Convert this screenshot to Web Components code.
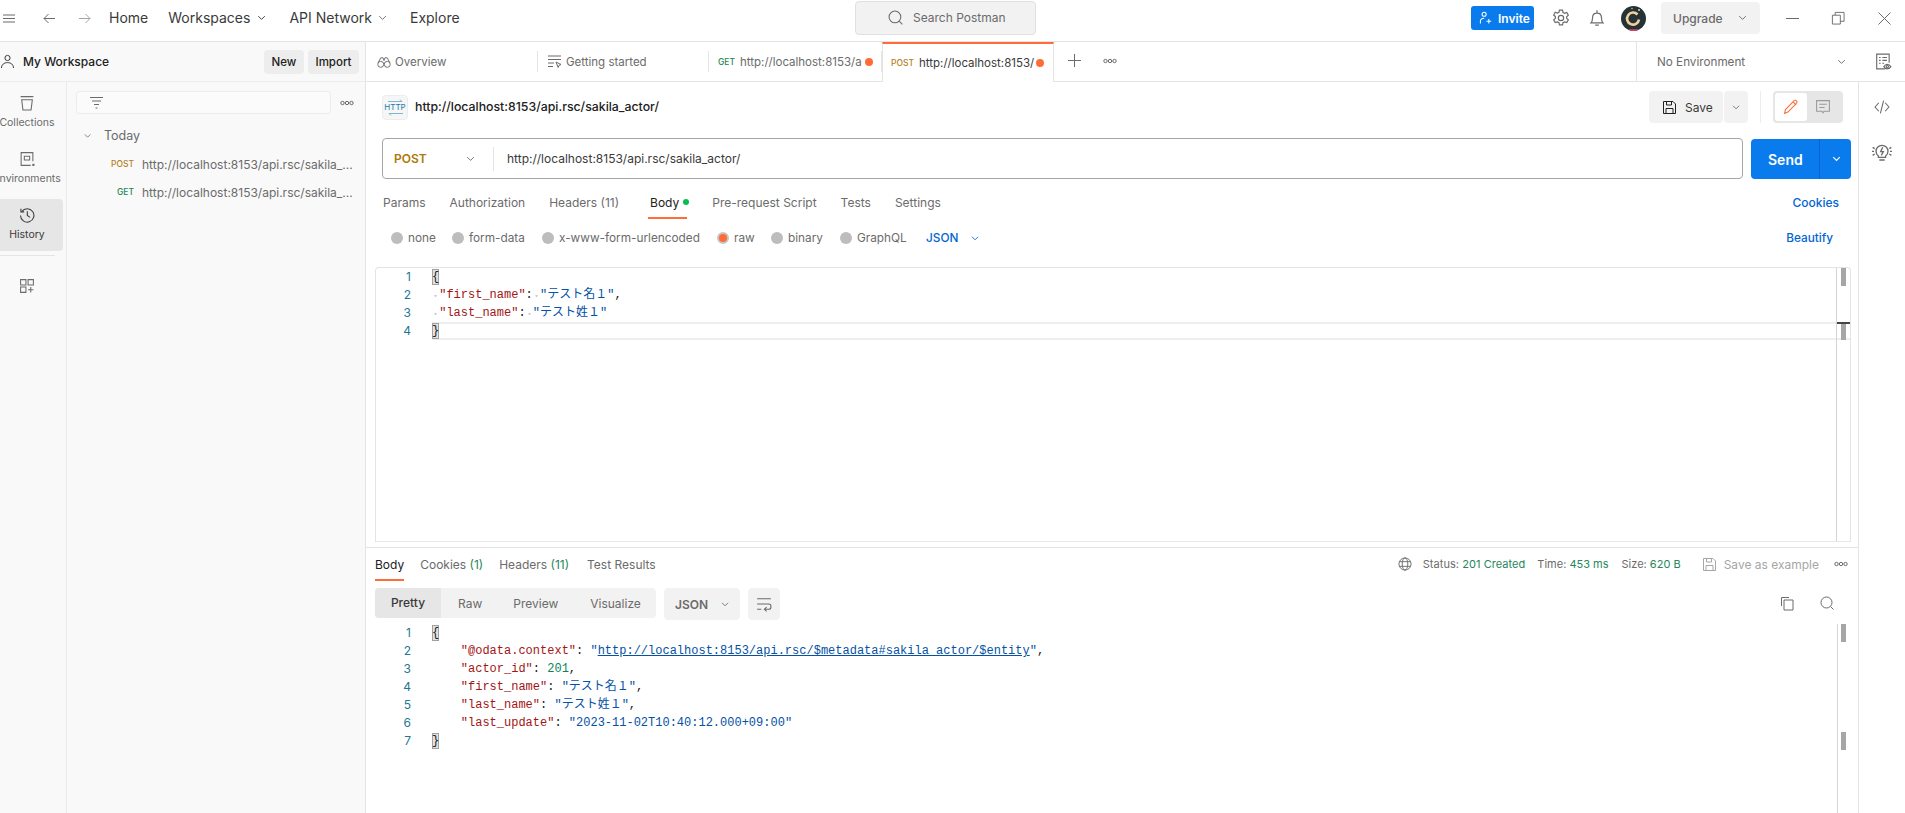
<!DOCTYPE html>
<html>
<head>
<meta charset="utf-8">
<title>Postman</title>
<style>
  html, body { margin: 0; height: 100%; background: #fff; overflow: hidden; }
  body { font: 12px Inter, "Noto Sans CJK JP", sans-serif; color: #212121; }
</style>
</head>
<body>
<pm-app></pm-app>
<script>
const ICON = {
  menu: '<path d="M1 4h12M1 7.5h12M1 11h12"/>',
  left: '<path d="M13 7.5H2M6.5 3 2 7.5 6.5 12"/>',
  right: '<path d="M1 7.5h11M7.5 3 12 7.5 7.5 12"/>',
  chev: '<path d="M3.5 5.5 7 9l3.5-3.5"/>',
  search: '<circle cx="6.5" cy="6.5" r="5.5"/><path d="m10.5 10.5 3 3"/>',
  gear: '<path d="M6.2 1h2.6l.4 1.9 1.3.7 1.8-.7 1.3 2.3-1.4 1.2v1.4l1.4 1.3-1.3 2.2-1.8-.6-1.3.7-.4 1.9H6.2l-.4-1.9-1.3-.7-1.8.6-1.3-2.2 1.4-1.3V6.2L1.4 5l1.3-2.3 1.8.7 1.3-.7z"/><circle cx="7.5" cy="7.5" r="2.2"/>',
  bell: '<path d="M2.5 11.5c1-1 1.3-2 1.3-4.2 0-2.3 1.5-3.9 3.7-3.9s3.7 1.6 3.7 3.9c0 2.2.3 3.2 1.3 4.2zM7.5 1v2.4M6 13.5h3"/>',
  user: '<circle cx="7.5" cy="4" r="2.6"/><path d="M1.5 14c0-3.4 2.6-5.4 6-5.4s6 2 6 5.4"/>',
  userplus: '<circle cx="5.5" cy="3.5" r="2.2"/><path d="M1.5 13.5V11c0-2 1.6-3.3 4-3.3M10.5 8.5v5M8 11h5"/>',
  trash: '<path d="M1.5 1.5h12M2.5 4.5h10l-1.2 9.5H3.7z"/>',
  env: '<path d="M13 9.5V1.5H2v12h9"/><path d="M5 5h5v3.5H5z"/><path d="M13 12.5h1v1h-1z" fill="currentColor"/>',
  hist: '<path d="M2.6 4.2A6.3 6.3 0 1 1 1.4 8"/><path d="M1.8 1.6v3h3M7.8 4v4l2.6 1.7"/>',
  add: '<path d="M1.5 1.5h5v5h-5zM8.5 1.5h5v5h-5zM1.5 8.5h5v5h-5zM11 8.5v5M8.5 11h5"/>',
  filter: '<path d="M1 2.5h13M3 6h9M5 9.5h5M6.5 13h2"/>',
  glasses: '<circle cx="4" cy="10" r="3.2"/><circle cx="11" cy="10" r="3.2"/><path d="M1.2 8.5 4 3h2.5l1 3 1-3H11l2.8 5.5"/>',
  doc: '<path d="M1 2h13M1 5.5h13M1 9h6M1 12.5h5M9 8l5 2.5-2 .8-.8 2.2z"/>',
  save: '<path d="M1.5 1.5H11L13.500 4v9.500h-12zM4.500 1.500V5h5V1.500M4 13.500V8.500h7v5"/>',
  pencil: '<path d="m1.500 13.500.8-3.600 8-8.200c.7-.6 1.700-.6 2.300 0s.6 1.600 0 2.300l-8 8.200zM9.500 2.800l2.800 2.800"/>',
  comment: '<path d="M1.500 1.500h12v10h-5l-1 1.500-1-1.500h-5zM4 5h7M4 8h5"/>',
  code: '<path d="M4.500 3.500 1 7.500l3.500 4M10.500 3.500l3.500 4-3.500 4M9 1.500l-3 12"/>',
  bulb: '<path d="M4.800 10.500C3.600 9.600 3 8.300 3 7a4.500 4.500 0 0 1 9 0c0 1.300-.6 2.600-1.800 3.500v1H4.800zM5.500 13.500h4M8 4 6.500 7.200h2L7 10M.5 4 2 5M.5 10 2 9M14.500 4 13 5M14.500 10 13 9M0 7h1.500M13.500 7H15"/>',
  envdoc: '<path d="M9 14H1.500V1h11v7.500M3.500 4H5M6.500 4h4M3.500 6.500H5M6.500 6.500h4M3.500 9H5M6.500 9H8"/><path d="M7.800 12c1-1.500 2-2 3-2s2.200.5 3.200 2c-1 1.500-2.100 2-3.200 2s-2-.5-3-2z"/><circle cx="10.900" cy="12" r="1"/>',
  globe: '<circle cx="7.500" cy="7.500" r="6.500"/><ellipse cx="7.500" cy="7.500" rx="3" ry="6.500"/><path d="M1.500 5h12M1.500 10h12"/>',
  copy: '<path d="M1.500 10V1.500H9"/><path d="M4 4h9v10H4z"/>',
  wrap: '<path d="M1 2.500h13M1 12.500h4M1 7.500h11c2.700 0 2.700 5 0 5H8M10 10.500l-2.200 2 2.200 2"/>',
  restore: '<path d="M1.500 4.500H10V14H1.500zM4.500 4.500v-3H14V11h-4"/>',
  min: '<path d="M1 7.500h13"/>',
  close: '<path d="m1.500 1.500 12 12M13.500 1.500l-12 12"/>',
  plus: '<path d="M7.500 1v13M1 7.500h13"/>',
};

// shared small inline svg helper
function icon(name, size = 16, color = '#6b6b6b', sw = 1) {
  return `<svg width="${size}" height="${size}" viewBox="0 0 15 15" fill="none" stroke="${color}" stroke-width="${sw}" style="display:block;flex:none;color:${color}">${ICON[name]}</svg>`;
}

const DOTS = `<svg width="14" height="6" viewBox="0 0 14 6" fill="none" stroke="#6b6b6b" style="display:block;flex:none"><circle cx="2.500" cy="3" r="1.700"/><circle cx="7" cy="3" r="1.700"/><circle cx="11.500" cy="3" r="1.700"/></svg>`;

class PmHeader extends HTMLElement {
  constructor() { super(); this.attachShadow({ mode: 'open' }); }
  connectedCallback() {
    this.shadowRoot.innerHTML = `
    <style>
      :host { display: flex; align-items: center; height: 36px; padding-bottom: 5px; border-bottom: 1px solid #e4e4e4; font: 14px/18px Inter, sans-serif; color: #3a3a3a; }
      .nav { display: flex; align-items: center; width: 855px; flex: none; padding-left: 2px; box-sizing: border-box; }
      .search { width: 181px; height: 34px; flex: none; box-sizing: border-box; background: #f2f2f2; border: 1px solid #e0e0e0; border-radius: 4px; display: flex; align-items: center; padding-left: 32px; gap: 9px; font-size: 12px; color: #6b6b6b; }
      .right { margin-left: auto; display: flex; align-items: center; height: 36px; }
      .invite { width: 63px; height: 24px; background: #097bed; color: #fff; border-radius: 3px; font: 600 12px Inter, sans-serif; display: flex; align-items: center; gap: 5px; padding-left: 8px; box-sizing: border-box; }
      .avatar { width: 25px; height: 25px; border-radius: 50%; background: #243338; margin-left: 15px; overflow: hidden; }
      .up { width: 99px; height: 32px; background: #f2f2f2; border-radius: 4px; margin-left: 15px; display: flex; align-items: center; box-sizing: border-box; padding-left: 12px; font: 500 12px Inter, sans-serif; color: #6b6b6b; justify-content: space-between; padding-right: 10px; }
    </style>
    <div class="nav">
      ${icon('menu', 15, '#6b6b6b')}
      <span style="margin-left:25px">${icon('left', 15, '#6b6b6b')}</span>
      <span style="margin-left:21px">${icon('right', 15, '#a6a6a6')}</span>
      <span style="margin-left:16px">Home</span>
      <span style="margin-left:20px">Workspaces</span>
      <span style="margin-left:5px">${icon('chev', 14, '#3a3a3a')}</span>
      <span style="margin-left:20px">API Network</span>
      <span style="margin-left:4px">${icon('chev', 14, '#6b6b6b')}</span>
      <span style="margin-left:20px">Explore</span>
    </div>
    <div class="search">${icon('search', 16, '#6b6b6b')}<span>Search Postman</span></div>
    <div class="right">
      <div class="invite">${icon('userplus', 14, '#fff', 1.1)}<span>Invite</span></div>
      <span style="margin-left:18px">${icon('gear', 18, '#6b6b6b')}</span>
      <span style="margin-left:18px">${icon('bell', 18, '#6b6b6b')}</span>
      <div class="avatar"><svg width="25" height="25" viewBox="0 0 25 25" fill="none" style="display:block"><path d="M16.500 8.500a6 6 0 1 0 1.500 5" stroke="#f3cf9b" stroke-width="2.600"/><circle cx="18" cy="4" r="1" fill="#f3cf9b"/><circle cx="11" cy="2.500" r=".7" fill="#f3cf9b"/><path d="M8 24.500h9" stroke="#e0425f" stroke-width="2.500"/></svg></div>
      <div class="up"><span>Upgrade</span>${icon('chev', 14, '#6b6b6b')}</div>
      <span style="margin-left:25px">${icon('min', 15, '#6b6b6b')}</span>
      <span style="margin-left:31px">${icon('restore', 14, '#6b6b6b')}</span>
      <span style="margin-left:32px;margin-right:13px">${icon('close', 15, '#6b6b6b')}</span>
    </div>`;
  }
}
customElements.define('pm-header', PmHeader);

class PmSidebar extends HTMLElement {
  constructor() { super(); this.attachShadow({ mode: 'open' }); }
  connectedCallback() {
    const rail = [['trash', 'Collections'], ['env', 'Environments'], ['hist', 'History']];
    this.shadowRoot.innerHTML = `
    <style>
      :host { display: flex; flex-direction: column; width: 366px; flex: none; box-sizing: border-box; border-right: 1px solid #e4e4e4; background: #f9f9f9; overflow: hidden; height: 100%; }
      .top { display: flex; align-items: center; height: 40px; flex: none; border-bottom: 1px solid #ececec; box-sizing: border-box; }
      .top b { font: 500 12px Inter, sans-serif; margin-left: 8px; color: #212121; }
      .btn { height: 24px; background: #ededed; border-radius: 4px; font: 500 11.5px/24px Inter, sans-serif; text-align: center; color: #212121; }
      .cols { display: flex; flex: 1; min-height: 0; }
      .rail { width: 67px; flex: none; box-sizing: border-box; border-right: 1px solid #ececec; padding-top: 5px; overflow: hidden; }
      .item { width: 54px; height: 52px; margin-bottom: 4px; display: flex; flex-direction: column; align-items: center; white-space: nowrap; font-size: 10.5px; color: #6b6b6b; box-sizing: border-box; padding-top: 8px; gap: 5px; }
      .item.on { width: 63px; color: #3a3a3a; background: #e6e6e6; border-radius: 0 4px 4px 0; padding-right: 9px; }
      .sep { width: 55px; height: 1px; background: #e4e4e4; }
      .list { flex: 1; min-width: 0; }
      .filter { margin: 9px 0 0 9px; width: 255px; height: 23px; box-sizing: border-box; background: #fbfbfb; border: 1px solid #ececec; border-radius: 3px; padding: 3px 0 0 12px; }
      .row { display: flex; align-items: center; white-space: nowrap; }
      .m { width: 67px; text-align: right; flex: none; font: 500 8.5px Inter, sans-serif; }
      .u { margin-left: 8px; color: #6b6b6b; font-size: 12px; }
    </style>
    <div class="top">
      ${icon('user', 15, '#3a3a3a')}
      <b>My Workspace</b>
      <div class="btn" style="margin-left:auto;width:40px">New</div>
      <div class="btn" style="margin-left:4px;width:51px;margin-right:6px">Import</div>
    </div>
    <div class="cols">
      <div class="rail">
        ${rail.map(r => `<div class="item ${r[0] === 'hist' ? 'on' : ''}">${icon(r[0], 16, r[0] === 'hist' ? '#3a3a3a' : '#6b6b6b')}<span>${r[1]}</span></div>`).join('')}
        <div class="sep"></div>
        <div style="width:54px;display:flex;justify-content:center;margin-top:22px">${icon('add', 16, '#6b6b6b')}</div>
      </div>
      <div class="list">
        <div style="display:flex;align-items:center">
          <div class="filter">${icon('filter', 15, '#6b6b6b')}</div>
          <span style="margin:9px 0 0 9px">${DOTS}</span>
        </div>
        <div class="row" style="margin-top:13px;color:#6b6b6b;font-size:12.5px;line-height:18px">
          <span style="margin-left:15px">${icon('chev', 12, '#6b6b6b')}</span>
          <span style="margin-left:10px">Today</span>
        </div>
        <div class="row" style="margin-top:10px;height:18px"><span class="m" style="color:#b5811d">POST</span><span class="u">http://localhost:8153/api.rsc/sakila_...</span></div>
        <div class="row" style="margin-top:10px;height:18px"><span class="m" style="color:#26875a">GET</span><span class="u">http://localhost:8153/api.rsc/sakila_...</span></div>
      </div>
    </div>`;
  }
}
customElements.define('pm-sidebar', PmSidebar);

class PmTabs extends HTMLElement {
  constructor() { super(); this.attachShadow({ mode: 'open' }); }
  connectedCallback() {
    const dot = '<i class="dot"></i>';
    this.shadowRoot.innerHTML = `
    <style>
      :host { display: flex; height: 40px; flex: none; border-bottom: 1px solid #e4e4e4; box-sizing: border-box; font: 11.5px Inter, sans-serif; color: #6b6b6b; }
      .tab { display: flex; align-items: center; height: 39px; box-sizing: border-box; white-space: nowrap; position: relative; }
      .tab::after { content: ""; position: absolute; right: 0; top: 9px; height: 21px; width: 1px; background: #e4e4e4; }
      .m { font: 500 8.5px Inter, sans-serif; }
      .dot { width: 8px; height: 8px; border-radius: 50%; background: #ff6c37; flex: none; }
      .on { border-top: 2px solid #ff6c37; border-right: 1px solid #e4e4e4; border-left: 1px solid #e4e4e4; height: 40px; margin-bottom: -1px; background: #fff; color: #3a3a3a; }
      .on::after { display: none; }
      .env { margin-left: auto; width: 269px; box-sizing: border-box; border-left: 1px solid #e4e4e4; display: flex; align-items: center; padding-left: 20px; font-size: 11.7px; }
    </style>
    <div class="tab" style="width:172px;padding-left:11px">${icon('glasses', 14)}<span style="margin-left:4px">Overview</span></div>
    <div class="tab" style="width:171px;padding-left:9px">${icon('doc', 15)}<span style="margin-left:4px">Getting started</span></div>
    <div class="tab" style="width:173px;padding-left:9px"><span class="m" style="color:#26875a">GET</span><span style="margin-left:5px;width:119px">http://localhost:8153/a</span><span style="margin-left:6px"></span>${dot}</div>
    <div class="tab on" style="width:172px;padding-left:8px"><span class="m" style="color:#b5811d">POST</span><span style="margin-left:5px;width:112px">http://localhost:8153/</span><span style="margin-left:5px"></span>${dot}</div>
    <span style="margin:11px 0 0 13px">${icon('plus', 15, '#6b6b6b')}</span>
    <span style="margin:16px 0 0 21px">${DOTS}</span>
    <div class="env">
      <span>No Environment</span>
      <span style="margin-left:auto">${icon('chev', 14)}</span>
      <span style="margin-left:26px;margin-right:13px">${icon('envdoc', 17)}</span>
    </div>`;
  }
}
customElements.define('pm-tabs', PmTabs);

// one line of the code editor, with a gutter number
class PmCode extends HTMLElement {
  constructor() { super(); this.attachShadow({ mode: 'open' }); }
  connectedCallback() {
    this.shadowRoot.innerHTML = `
    <style>
      :host { display: flex; height: 18px; font: 12px/18px "Liberation Mono", "Noto Sans CJK JP", monospace; color: #212121; white-space: pre; }
      :host([active]) .c { box-shadow: inset 0 2px 0 #eeeeee, inset 0 -2px 0 #eeeeee; }
      .n { width: var(--gutter, 36px); text-align: right; color: #237893; flex: none; font: 12px/18px Inter, sans-serif; }
      .c { margin-left: 21px; flex: 1; }
    </style>
    <span class="n">${this.getAttribute('n')}</span><span class="c"><slot></slot></span>`;
  }
}
customElements.define('pm-code', PmCode);

class PmRequest extends HTMLElement {
  constructor() { super(); this.attachShadow({ mode: 'open' }); }
  connectedCallback() {
    const radios = [['none', 0, 61], ['form-data', 0, 90], ['x-www-form-urlencoded', 0, 175], ['raw', 1, 54], ['binary', 0, 69], ['GraphQL', 0, 86]];
    this.shadowRoot.innerHTML = `
    <style>
      :host { display: flex; flex-direction: column; height: 466px; flex: none; box-sizing: border-box; font: 12px Inter, sans-serif; color: #6b6b6b; border-bottom: 1px solid #e4e4e4; --gutter: 35px; }
      .title { display: flex; align-items: center; height: 32px; margin: 9px 0 0 16px; }
      .http { width: 26px; height: 25px; background: #f6f6f6; border: 1px solid #ececec; border-radius: 4px; box-sizing: border-box; display: flex; flex-direction: column; align-items: center; justify-content: center; font: 8px/9px Inter, sans-serif; color: #1c7ba8; }
      .title b { font: 500 12.3px Inter, sans-serif; color: #212121; margin-left: 7px; position: relative; top: -1px; }
      .g { display: flex; height: 32px; background: #f2f2f2; border-radius: 4px; align-items: center; }
      .url { display: flex; margin: 15px 0 0 16px; align-items: stretch; height: 41px; }
      .box { width: 1361px; box-sizing: border-box; border: 1px solid #a6a6a6; border-radius: 4px; display: flex; align-items: center; padding-left: 11px; color: #3a3a3a; }
      .send { margin: 1px 0 0 8px; width: 100px; height: 40px; border-radius: 4px; background: #097bed; color: #fff; display: flex; align-items: center; font: 600 14px Inter, sans-serif; }
      .rt { display: flex; height: 18px; margin: 14px 0 0 17px; align-items: center; position: relative; white-space: nowrap; }
      .rt span { display: block; }
      .under { position: absolute; left: 265px; top: 24px; width: 39px; height: 2px; background: #ff6c37; }
      .opt { display: flex; align-items: center; margin: 18px 0 0 25px; height: 18px; white-space: nowrap; font-size: 11.8px; }
      .o { display: flex; align-items: center; flex: none; }
      .r { width: 12px; height: 12px; border-radius: 50%; background: #bdbdbd; box-sizing: border-box; flex: none; margin-right: 5px; }
      .r.on { background: #ff6c37; border: 2px solid #c6c6c6; }
      a { color: #0265d2; font-weight: 500; text-decoration: none; }
      .editor { position: relative; margin: 20px 0 0 9px; height: 275px; width: 1476px; border: 1px solid #e4e4e4; border-bottom-color: #e8e8e8; border-radius: 4px 4px 0 0; box-sizing: border-box; flex: none; }
      .sb { position: absolute; top: 0; bottom: 0; right: 0; width: 14px; box-sizing: border-box; border-left: 1px solid #d4d4d4; }
      .th { position: absolute; left: 4px; width: 5px; background: #a6a6a6; }
      .cur { position: absolute; left: 0; right: 0; top: 54px; height: 2px; background: #444; }
    </style>
    <div class="title">
      <div class="http">
        <svg width="17" height="4" viewBox="0 0 17 4" fill="none" stroke="#7fb6cf" style="display:block"><path d="M1 2.500h14M13 .5l2 2"/></svg>
        <span>HTTP</span>
        <svg width="17" height="4" viewBox="0 0 17 4" fill="none" stroke="#7fb6cf" style="display:block"><path d="M16 1.500H2M4 3.500l-2-2"/></svg>
      </div>
      <b>http://localhost:8153/api.rsc/sakila_actor/</b>
      <div class="g" style="margin-left:auto;width:74px">
        <span style="margin-left:13px">${icon('save', 15, '#212121')}</span>
        <span style="margin-left:8px;color:#3a3a3a">Save</span>
      </div>
      <div class="g" style="margin-left:1px;width:24px;justify-content:center">${icon('chev', 13)}</div>
      <div style="width:1px;height:32px;background:#ececec;margin-left:12px"></div>
      <div class="g" style="margin-left:12px;width:70px;background:#e6e6e6;padding-left:2px;box-sizing:border-box">
        <div style="width:32px;height:28px;background:#fff;border-radius:3px;display:flex;align-items:center;justify-content:center">${icon('pencil', 16, '#ff6c37')}</div>
        <div style="margin-left:8px">${icon('comment', 16, '#9a9a9a')}</div>
      </div>
      <div style="width:15px"></div>
    </div>
    <div class="url">
      <div class="box">
        <span style="font:600 12px Inter,sans-serif;color:#ad7a03;width:70px">POST</span>
        ${icon('chev', 14)}
        <span style="width:1px;height:24px;background:#e4e4e4;margin-left:15px"></span>
        <span style="margin-left:13px">http://localhost:8153/api.rsc/sakila_actor/</span>
      </div>
      <div class="send"><span style="margin-left:17px">Send</span><span style="margin-left:16px;width:1px;height:40px;background:#0265d2"></span><span style="margin-left:10px">${icon('chev', 14, '#fff', 1.2)}</span></div>
    </div>
    <div class="rt">
      <span>Params</span><span style="margin-left:24px">Authorization</span><span style="margin-left:24px">Headers (11)</span>
      <span style="margin-left:31px;color:#212121">Body</span><span style="margin-left:4px;width:6px;height:6px;border-radius:50%;background:#0cbb52"></span>
      <span style="margin-left:23px">Pre-request Script</span><span style="margin-left:24px">Tests</span><span style="margin-left:24px">Settings</span>
      <a style="margin-left:auto;margin-right:19px">Cookies</a>
      <i class="under"></i>
    </div>
    <div class="opt">
      ${radios.map(r => `<div class="o" style="width:${r[2]}px"><i class="r ${r[1] ? 'on' : ''}"></i><span>${r[0]}</span></div>`).join('')}
      <a>JSON</a><span style="margin-left:11px">${icon('chev', 13, '#0265d2')}</span>
      <a style="margin-left:auto;margin-right:25px">Beautify</a>
    </div>
    <div class="editor">
      <slot></slot>
      <div class="sb"><i class="th" style="top:0;height:18px"></i><i class="th" style="top:55px;height:17px"></i><i class="cur"></i></div>
    </div>`;
  }
}
customElements.define('pm-request', PmRequest);

class PmResponse extends HTMLElement {
  constructor() { super(); this.attachShadow({ mode: 'open' }); }
  connectedCallback() {
    this.shadowRoot.innerHTML = `
    <style>
      :host { display: flex; flex-direction: column; flex: 1; min-height: 0; font: 12px Inter, sans-serif; color: #6b6b6b; position: relative; }
      .rt { display: flex; align-items: center; height: 18px; margin: 7px 0 0 9px; white-space: nowrap; position: relative; }
      .under { position: absolute; left: 0; top: 24px; width: 29px; height: 2px; background: #ff6c37; }
      .bar { display: flex; margin: 15px 0 0 9px; height: 32px; align-items: flex-start; }
      .seg { display: flex; width: 281px; height: 30px; background: #f2f2f2; border-radius: 4px; overflow: hidden; align-items: center; }
      .seg .a { width: 66px; height: 30px; line-height: 30px; text-align: center; background: #e6e6e6; color: #3a3a3a; font-weight: 500; }
      .dd { margin-left: 8px; width: 76px; height: 32px; background: #f2f2f2; border-radius: 4px; display: flex; align-items: center; box-sizing: border-box; padding-left: 11px; font-weight: 600; }
      .wrap { margin-left: 8px; width: 32px; height: 32px; background: #f2f2f2; border-radius: 4px; display: flex; align-items: center; justify-content: center; }
      .g { color: #26875a; }
      .code { position: relative; margin: 4px 0 0 9px; width: 1472px; flex: 1; }
      .sb { position: absolute; top: 0; bottom: 0; right: 0; width: 10px; box-sizing: border-box; border-left: 1px solid #d4d4d4; }
      .th { position: absolute; left: 3px; width: 5px; background: #a6a6a6; }
    </style>
    <div class="rt">
      <span style="color:#212121">Body</span>
      <span style="margin-left:16px">Cookies <span class="g">(1)</span></span>
      <span style="margin-left:16px">Headers <span class="g">(11)</span></span>
      <span style="margin-left:18px">Test Results</span>
      <span style="margin-left:auto">${icon('globe', 14)}</span>
      <span style="margin-left:11px;font-size:11px;letter-spacing:.05px">Status: <span class="g">201 Created</span></span>
      <span style="margin-left:12px;font-size:11px">Time: <span class="g">453 ms</span></span>
      <span style="margin-left:13px;font-size:11px">Size: <span class="g">620 B</span></span>
      <span style="margin-left:21px">${icon('save', 15, '#a6a6a6')}</span>
      <span style="margin-left:7px;color:#a6a6a6;font-size:12px">Save as example</span>
      <span style="margin-left:15px;margin-right:10px">${DOTS}</span>
      <i class="under"></i>
    </div>
    <div class="bar">
      <div class="seg"><span class="a">Pretty</span><span style="margin-left:17px">Raw</span><span style="margin-left:31px">Preview</span><span style="margin-left:32px">Visualize</span></div>
      <div class="dd"><span>JSON</span><span style="margin-left:11px">${icon('chev', 13)}</span></div>
      <div class="wrap">${icon('wrap', 16)}</div>
      <span style="margin:8px 0 0 auto">${icon('copy', 15)}</span>
      <span style="margin:8px 23px 0 25px">${icon('search', 15)}</span>
    </div>
    <div class="code">
      <slot></slot>
      <div class="sb"><i class="th" style="top:0;height:18px"></i><i class="th" style="top:108px;height:18px"></i></div>
    </div>`;
  }
}
customElements.define('pm-response', PmResponse);

class PmApp extends HTMLElement {
  constructor() { super(); this.attachShadow({ mode: 'open' }); }
  connectedCallback() {
    const k = s => `<span style="color:#a31515">${s}</span>`;
    const v = s => `<span style="color:#0451a5">${s}</span>`;
    const ws = '<i style="display:inline-block;width:7.2px;height:18px;background:radial-gradient(circle at 50% 55%,#c8c8c8 0 1px,transparent 1.2px);font-style:normal"> </i>';
    const br = s => `<span style="display:inline-block;width:7.2px;height:16px;line-height:16px;background:#e2e2e2;box-shadow:inset 0 0 0 1px #a0a0a0;vertical-align:top;margin-top:1px">${s}</span>`;
    this.shadowRoot.innerHTML = `
    <style>
      :host { display: flex; flex-direction: column; height: 813px; position: relative; overflow: hidden; }
      .body { display: flex; flex: 1; min-height: 0; }
      .main { flex: 1; min-width: 0; display: flex; flex-direction: column; }
      .cols { display: flex; flex: 1; min-height: 0; }
      .center { flex: 1; min-width: 0; display: flex; flex-direction: column; border-right: 1px solid #e4e4e4; }
      .side { width: 46px; flex: none; display: flex; flex-direction: column; align-items: center; padding-top: 17px; box-sizing: border-box; }
    </style>
    <pm-header></pm-header>
    <div class="body">
      <pm-sidebar></pm-sidebar>
      <div class="main">
        <pm-tabs></pm-tabs>
        <div class="cols">
          <div class="center">
            <pm-request>
              <pm-code n="1">${br('{')}</pm-code>
              <pm-code n="2">${ws}${k('"first_name"')}:${ws}${v('"テスト名１"')},</pm-code>
              <pm-code n="3">${ws}${k('"last_name"')}:${ws}${v('"テスト姓１"')}</pm-code>
              <pm-code n="4" active>${br('}')}</pm-code>
            </pm-request>
            <pm-response>
              <pm-code n="1">${br('{')}</pm-code>
              <pm-code n="2">    ${k('"@odata.context"')}: ${v('"<u>http://localhost:8153/api.rsc/$metadata#sakila_actor/$entity</u>"')},</pm-code>
              <pm-code n="3">    ${k('"actor_id"')}: <span style="color:#098658">201</span>,</pm-code>
              <pm-code n="4">    ${k('"first_name"')}: ${v('"テスト名１"')},</pm-code>
              <pm-code n="5">    ${k('"last_name"')}: ${v('"テスト姓１"')},</pm-code>
              <pm-code n="6">    ${k('"last_update"')}: ${v('"2023-11-02T10:40:12.000+09:00"')}</pm-code>
              <pm-code n="7">${br('}')}</pm-code>
            </pm-response>
          </div>
          <div class="side">${icon('code', 16)}<span style="margin-top:27px">${icon('bulb', 20)}</span></div>
        </div>
      </div>
    </div>`;
  }
}
customElements.define('pm-app', PmApp);
</script>
</body>
</html>
